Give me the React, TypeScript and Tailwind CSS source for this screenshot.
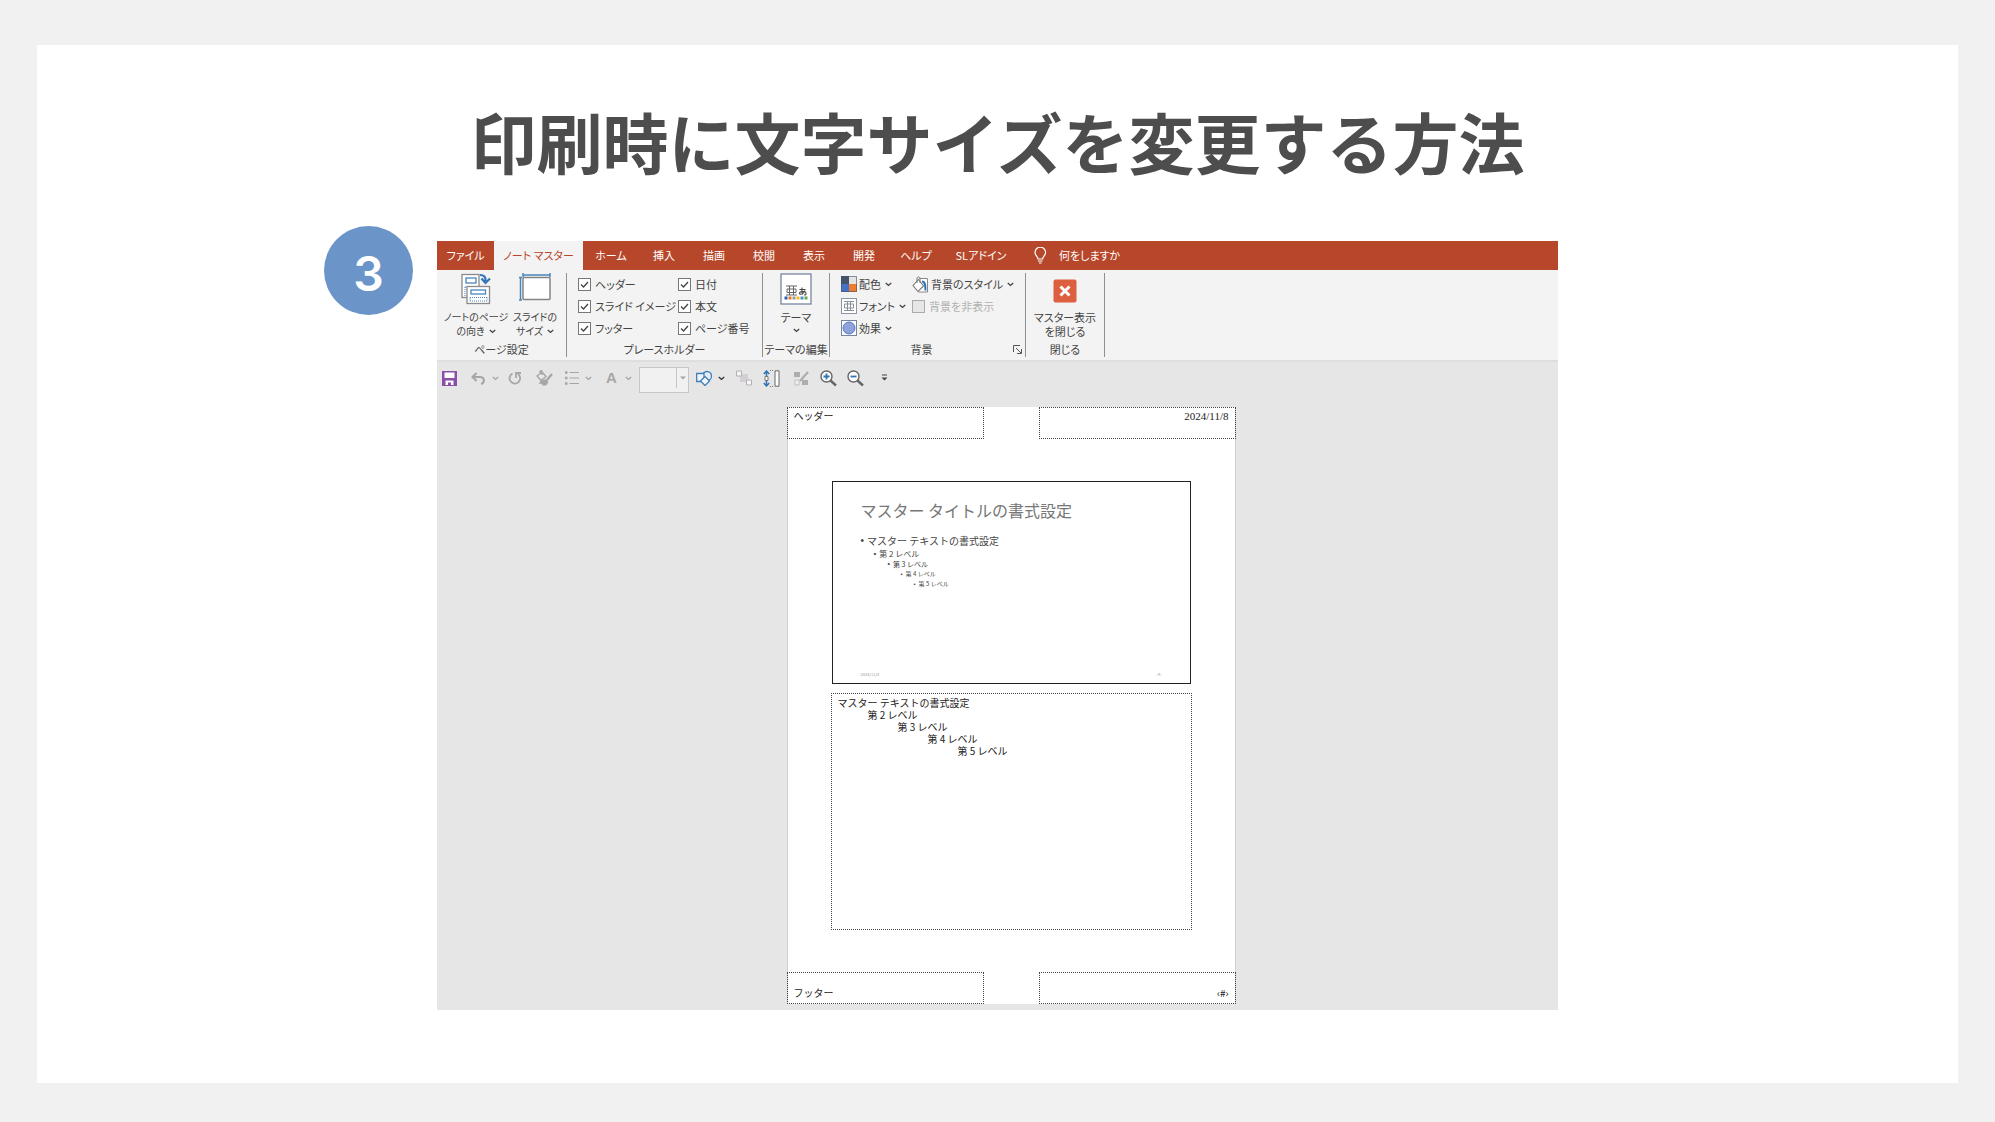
import React from 'react';

const TABS = [
  { label: 'ファイル', width: 'w-[57px]' },
  { label: 'ノート マスター', width: 'w-[89px]', active: true },
  { label: 'ホーム', width: 'w-[56px]' },
  { label: '挿入', width: 'w-[50px]' },
  { label: '描画', width: 'w-[50px]' },
  { label: '校閲', width: 'w-[50px]' },
  { label: '表示', width: 'w-[50px]' },
  { label: '開発', width: 'w-[50px]' },
  { label: 'ヘルプ', width: 'w-[54px]' },
  { label: 'SLアドイン', width: 'w-[76px]' },
];

const Chevron: React.FC<{ className?: string }> = ({ className = 'text-[#444]' }) => (
  <svg className={`shrink-0 ${className}`} width="7" height="5" viewBox="0 0 7 5" fill="none" stroke="currentColor" strokeWidth="1.4">
    <path d="M0.8 1 3.5 3.4 6.2 1" />
  </svg>
);

const PageOrientationIcon = () => (
  <svg width="30" height="32" viewBox="0 0 30 32" fill="none">
    <rect x="1" y="1.5" width="17" height="23" fill="#fff" stroke="#8a8a8a" strokeWidth="1.3" />
    <rect x="5" y="5" width="10" height="5" stroke="#4a86bd" strokeWidth="1.3" />
    <path d="M4 14v9M4 14h2" stroke="#4a86bd" strokeDasharray="1 1" />
    <path d="M19 2c4 0 6 2 5.500 6M20.500 5.500l4 4.500 4.500-4.500" stroke="#2f74b5" strokeWidth="2.200" />
    <rect x="6" y="13.500" width="22.500" height="17" fill="#fff" stroke="#8a8a8a" strokeWidth="1.3" />
    <rect x="10" y="17" width="14.500" height="4" stroke="#4a86bd" strokeWidth="1.3" />
    <path d="M9 24.500h17M9 28h17M9 24.500v4M26 24.500v4" stroke="#4a86bd" strokeDasharray="1 1" />
  </svg>
);

const SlideSizeIcon = () => (
  <svg width="32" height="32" viewBox="0 0 32 32" fill="none">
    <path d="M4 2h27M4 0v4M31 0v4M1.500 4v23M0 4.500h3M0 27h3" stroke="#4a86bd" strokeWidth="1.500" />
    <rect x="4" y="4.500" width="27" height="22" rx="1" fill="#fff" stroke="#858585" strokeWidth="1.500" />
  </svg>
);

const ThemeIcon = () => (
  <svg width="32" height="32" viewBox="0 0 32 32" fill="none">
    <rect x="1" y="1" width="30" height="30" fill="#fff" stroke="#7784a3" strokeWidth="1.300" />
    <path d="M6 13h11M6 22h11M9.500 13v9M13.500 13v9M7 16h9v3.500H7z" stroke="#666" />
    <path d="M19.500 16.500h6M22 14.500c-.5 3 0 5 .5 7M25 17.500c-1 3-5 5-5.500 3s6-3 6.500-.5-1.500 2-2 2" stroke="#444" strokeWidth="1.100" />
    <path d="M4.500 23.500h3v3h-3z" fill="#2b5fb3" />
    <path d="M8.500 23.500h3v3h-3z" fill="#e8742c" />
    <path d="M12.500 23.500h3v3h-3z" fill="#9a9a9a" />
    <path d="M16.500 23.500h3v3h-3z" fill="#f2bc1b" />
    <path d="M20.500 23.500h3v3h-3z" fill="#4a8fd0" />
    <path d="M24.500 23.500h3v3h-3z" fill="#6aa84a" />
  </svg>
);

const ColorsIcon = () => (
  <svg width="16" height="16" viewBox="0 0 16 16">
    <path d="M0 0h8v8H0z" fill="#44546a" />
    <path d="M8 0h8v8H8z" fill="#e4e4e4" />
    <path d="M0 8h8v8H0z" fill="#4472c4" />
    <path d="M8 8h8v8H8z" fill="#ed7d31" />
    <path d="M.5 .5h15v15H.5z" fill="none" stroke="#44546a" strokeOpacity=".6" />
  </svg>
);

const FontsIcon = () => (
  <svg width="16" height="16" viewBox="0 0 16 16" fill="none">
    <rect x="0.5" y="0.5" width="15" height="15" fill="#fff" stroke="#8c94a6" />
    <path d="M3 3.500h10M3 12.500h10M6.500 3.500v9M9.500 3.500v9M3.500 6h9v4h-9z" stroke="#8b8f9c" />
  </svg>
);

const EffectsIcon = () => (
  <svg width="16" height="16" viewBox="0 0 16 16">
    <rect x="0.5" y="0.5" width="15" height="15" fill="#fff" stroke="#7784a3" />
    <circle cx="8" cy="8" r="6" fill="#8fa2dc" stroke="#5b78c4" />
  </svg>
);

const BackgroundStyleIcon = () => (
  <svg width="17" height="17" viewBox="0 0 17 17" fill="none">
    <path d="M7.500 2.500h8v13.500H6.500" fill="#fff" stroke="#888" />
    <path d="M1 9.500l5.500-6 5 6.500-5.500 5.500z" fill="#fff" stroke="#777" strokeWidth="1.100" />
    <path d="M5 7V2.500c0-2 3-2 3 0V7" stroke="#777" />
    <path d="M10 5.500c3 0 3.500 3 3.500 9" stroke="#2f74b5" strokeWidth="2" />
  </svg>
);

const CloseIcon = () => (
  <svg width="24" height="24" viewBox="0 0 24 24">
    <rect x="0.500" y="0.500" width="23" height="23" rx="2" fill="#dc5f40" />
    <path d="M7.500 7.500l9 9M16.500 7.500l-9 9" stroke="#fff" strokeWidth="3" />
  </svg>
);

const CheckField: React.FC<{ id: string; label: string }> = ({ id, label }) => (
  <div className="flex h-[22px] items-center gap-1">
    <span className="grid h-[13px] w-[13px] shrink-0">
      <input
        id={id}
        type="checkbox"
        defaultChecked
        className="peer col-start-1 row-start-1 h-[13px] w-[13px] appearance-none border border-[#777] bg-white"
      />
      <svg className="pointer-events-none invisible col-start-1 row-start-1 peer-checked:visible" width="13" height="13" viewBox="0 0 13 13" fill="none" stroke="#444" strokeWidth="1.300">
        <path d="M3 6.500 5.500 9 10 4" />
      </svg>
    </span>
    <label htmlFor={id} className="whitespace-nowrap">{label}</label>
  </div>
);

const MenuButton: React.FC<{ icon: React.ReactNode; label: string }> = ({ icon, label }) => (
  <button type="button" className="flex h-[22px] items-center gap-0.5 whitespace-nowrap">
    {icon}
    <span>{label}</span>
    <Chevron className="ml-0.5 text-[#444]" />
  </button>
);

const Group: React.FC<{ title: string; width: string; launcher?: boolean; children: React.ReactNode }> = ({ title, width, launcher, children }) => (
  <section className={`flex shrink-0 flex-col border-r border-[#8f8f8f] ${width}`}>
    <div className="flex flex-1">{children}</div>
    <div className="flex h-4 items-center">
      <h2 className="flex-1 whitespace-nowrap text-center">{title}</h2>
      {launcher && (
        <button type="button" aria-label="背景の書式設定" className="mr-[3px]">
          <svg width="9" height="9" viewBox="0 0 9 9" fill="none" stroke="#555">
            <path d="M.5 7V.5H7M3 3l5 5M8.500 4v4.500H4" />
          </svg>
        </button>
      )}
    </div>
  </section>
);

const Ribbon = () => (
  <div className="flex h-[92px] overflow-hidden border-b-2 border-[#dedede] bg-[#f3f3f3] pt-[3px] pb-[3px] text-[11px] leading-[14px] text-[#444]">
    <Group title="ページ設定" width="w-[130px]">
      <button type="button" className="flex w-[78px] flex-col items-center whitespace-nowrap text-[10px]">
        <PageOrientationIcon />
        <span className="mt-[5px]">ノートのページ</span>
        <span className="flex items-center gap-1">の向き<Chevron /></span>
      </button>
      <button type="button" className="flex w-10 flex-col items-center whitespace-nowrap text-[10px]">
        <SlideSizeIcon />
        <span className="mt-[5px]">スライドの</span>
        <span className="flex items-center gap-1">サイズ<Chevron /></span>
      </button>
    </Group>
    <Group title="プレースホルダー" width="w-[196px]">
      <div className="w-[111px] pl-[11px]">
        <CheckField id="ph-header" label="ヘッダー" />
        <CheckField id="ph-image" label="スライド イメージ" />
        <CheckField id="ph-footer" label="フッター" />
      </div>
      <div>
        <CheckField id="ph-date" label="日付" />
        <CheckField id="ph-body" label="本文" />
        <CheckField id="ph-number" label="ページ番号" />
      </div>
    </Group>
    <Group title="テーマの編集" width="w-[67px]">
      <button type="button" className="flex flex-1 flex-col items-center">
        <ThemeIcon />
        <span className="mt-[5px] mb-1">テーマ</span>
        <Chevron />
      </button>
    </Group>
    <Group title="背景" width="w-[196px]" launcher>
      <div className="w-[82px] pl-[11px]">
        <MenuButton icon={<ColorsIcon />} label="配色" />
        <MenuButton icon={<FontsIcon />} label="フォント" />
        <MenuButton icon={<EffectsIcon />} label="効果" />
      </div>
      <div>
        <MenuButton icon={<BackgroundStyleIcon />} label="背景のスタイル" />
        <div className="flex h-[22px] items-center gap-1 text-[#b1b1b1]">
          <input id="hide-bg" type="checkbox" disabled className="h-[13px] w-[13px] appearance-none border border-[#ababab] bg-[#e6e6e6]" />
          <label htmlFor="hide-bg" className="whitespace-nowrap">背景を非表示</label>
        </div>
      </div>
    </Group>
    <Group title="閉じる" width="w-[79px]">
      <button type="button" className="flex flex-1 flex-col items-center whitespace-nowrap pt-1.5">
        <CloseIcon />
        <span className="mt-[7px]">マスター表示</span>
        <span>を閉じる</span>
      </button>
    </Group>
  </div>
);

const ToolButton: React.FC<{ label: string; className?: string; children: React.ReactNode }> = ({ label, className = '', children }) => (
  <button type="button" aria-label={label} className={`flex shrink-0 items-center ${className}`}>
    {children}
  </button>
);

const QuickAccess = () => (
  <div className="flex h-8 items-center overflow-hidden pl-[5px] text-[#a6a6a6]">
    <ToolButton label="上書き保存" className="w-[29px]">
      <svg width="15" height="15" viewBox="0 0 15 15">
        <path d="M0 0h15v15H0z" fill="#8a4fa8" />
        <path d="M2.500 1.500h10v5.500h-10zM3.500 9.500h8V14h-8z" fill="#fff" />
        <path d="M6 11.500h3V14H6z" fill="#8a4fa8" />
      </svg>
    </ToolButton>
    <ToolButton label="元に戻す" className="w-[37px] gap-1.5">
      <svg width="15" height="13" viewBox="0 0 15 13" fill="none" stroke="currentColor" strokeWidth="2">
        <path d="M5.500 1 1.500 5l4 4M2 5h7c5 0 5 6 1 7" />
      </svg>
      <Chevron className="text-[#a6a6a6]" />
    </ToolButton>
    <ToolButton label="繰り返し" className="w-[28px]">
      <svg width="14" height="14" viewBox="0 0 14 14" fill="none" stroke="currentColor" strokeWidth="1.800">
        <path d="M4.500 2.500a5.300 5.300 0 1 0 5.500.5M8 7V2h5" />
      </svg>
    </ToolButton>
    <ToolButton label="塗りつぶし" className="w-[29px]">
      <svg width="17" height="16" viewBox="0 0 17 16" fill="none" stroke="currentColor" strokeWidth="1.300">
        <path d="M1 6l5-4 4 4.500-5 4zM4 4V1.500c0-1 2-1 2 0V5" />
        <path d="M16 4l-5 6" strokeWidth="2.200" />
        <path d="M5 11.500c2 0 3-2 5-1.500 3 1 1 5-2 5-2 0-1.500-2.500-4-2z" fill="currentColor" />
      </svg>
    </ToolButton>
    <ToolButton label="箇条書き" className="w-[41px] gap-1.5">
      <svg width="14" height="14" viewBox="0 0 14 14" fill="none" stroke="currentColor">
        <path d="M4.500 1.500H14M4.500 7H14M4.500 12.500H14" strokeWidth="1.200" />
        <path d="M0 1.500h2.500M0 7h2.500M0 12.500h2.500" strokeWidth="2.500" />
      </svg>
      <Chevron className="text-[#a6a6a6]" />
    </ToolButton>
    <ToolButton label="フォントの色" className="w-[33px] gap-2">
      <span className="font-['Liberation_Sans',sans-serif] text-[15px] font-bold">A</span>
      <Chevron className="text-[#a6a6a6]" />
    </ToolButton>
    <span className="mr-[7px] grid h-[22px] w-[50px] shrink-0 grid-cols-[1fr_13px]">
      <select aria-label="フォント サイズ" disabled className="col-span-2 col-start-1 row-start-1 appearance-none border border-[#c6c6c6] bg-[#f1f1f1]">
        <option></option>
      </select>
      <svg className="pointer-events-none col-start-2 row-start-1" width="13" height="22" viewBox="0 0 13 22">
        <path d="M.5 1v20" stroke="#c6c6c6" />
        <path d="M4 9.500h6l-3 3z" fill="#a6a6a6" />
      </svg>
    </span>
    <ToolButton label="図形" className="w-[40px] gap-1.5">
      <svg width="16" height="16" viewBox="0 0 16 16" fill="none" stroke="#3f80b9" strokeWidth="1.300">
        <circle cx="11" cy="6" r="4.500" fill="#e6eef5" />
        <path d="M.7 3.500H8v8H.7z" fill="#f3f6fa" />
        <path d="M9 6.500l4.500 4.500L9 15.500 4.500 11z" fill="#f3f6fa" />
      </svg>
      <Chevron className="text-[#333]" />
    </ToolButton>
    <ToolButton label="グループ化" className="w-[27px]">
      <svg width="16" height="16" viewBox="0 0 16 16">
        <path d="M4 4h8v8H4z" fill="#d3d0d4" />
        <path d="M.5 1h5v5h-5zM10.500 10h5v5h-5z" fill="#f5f5f5" stroke="#b5b0b6" />
      </svg>
    </ToolButton>
    <ToolButton label="上下に整列" className="w-[31px]">
      <svg width="17" height="17" viewBox="0 0 17 17" fill="none">
        <path d="M3.500 1v15M.8 4l2.700-3 2.700 3M.8 13l2.700 3 2.700-3" stroke="#2f74b5" strokeWidth="1.500" />
        <path d="M2 6.500h3v4H2z" fill="#fff" stroke="#777" />
        <path d="M7 .5h4M7 16.500h4" stroke="#777" strokeDasharray="1 1" />
        <path d="M12 .8h4v15.400h-4z" fill="#fff" stroke="#666" />
      </svg>
    </ToolButton>
    <ToolButton label="書式のコピー" className="w-[26px]">
      <svg width="15" height="15" viewBox="0 0 15 15">
        <path d="M0 1h6v5H0zM8 9h6v5H8z" fill="#adadad" />
        <path d="M14 1 6 10" stroke="#adadad" strokeWidth="2.200" />
        <path d="M1 9h4v5H1z" fill="#f3f3f3" stroke="#bdbdbd" />
      </svg>
    </ToolButton>
    <ToolButton label="拡大" className="w-[27px]">
      <svg width="17" height="17" viewBox="0 0 17 17" fill="none">
        <circle cx="6.500" cy="6.500" r="5.500" fill="#fff" stroke="#666" strokeWidth="1.400" />
        <path d="M10.500 10.500l5.500 5" stroke="#666" strokeWidth="2.400" />
        <path d="M3.500 6.500h6M6.500 3.500v6" stroke="#2f74b5" strokeWidth="1.800" />
      </svg>
    </ToolButton>
    <ToolButton label="縮小" className="w-[34px]">
      <svg width="17" height="17" viewBox="0 0 17 17" fill="none">
        <circle cx="6.500" cy="6.500" r="5.500" fill="#fff" stroke="#666" strokeWidth="1.400" />
        <path d="M10.500 10.500l5.500 5" stroke="#666" strokeWidth="2.400" />
        <path d="M3.500 6.500h6" stroke="#2f74b5" strokeWidth="1.800" />
      </svg>
    </ToolButton>
    <ToolButton label="クイック アクセス ツール バーのユーザー設定">
      <svg width="7" height="8" viewBox="0 0 7 8" fill="#444">
        <path d="M1 .5h5v1H1zM.5 3.500h6l-3 3z" />
      </svg>
    </ToolButton>
  </div>
);

const NotesPage = () => (
  <div className="flex justify-center pt-[13px] pl-[27px] font-['Noto_Sans_CJK_JP',sans-serif] [font-feature-settings:normal]">
    <div className="w-full max-w-[449px] border-x border-[#d0d0d0] bg-white text-[10px] leading-3 text-[#222]">
      <div className="-mx-px flex justify-between">
        <div className="h-8 w-[197px] border border-dotted border-[#444] px-1.5 pt-0.5">ヘッダー</div>
        <div className="h-8 w-[197px] border border-dotted border-[#444] px-1.5 pt-0.5 text-right font-['Liberation_Serif',serif] text-[11px]">2024/11/8</div>
      </div>

      <div className="mx-11 mt-[42px] flex h-[203px] flex-col border border-[#222] px-7 pt-4 pb-1.5">
        <p className="text-[16px] leading-6 text-[#777]">マスター タイトルの書式設定</p>
        <ul className="mt-3 text-[#444]">
          <li className="flex gap-[3px] text-[10px] leading-[14px]"><span className="font-['Liberation_Sans',sans-serif]">•</span>マスター テキストの書式設定</li>
          <li className="ml-[13px] flex gap-[3px] text-[8px] leading-[11px]"><span className="font-['Liberation_Sans',sans-serif]">•</span>第 2 レベル</li>
          <li className="ml-[27px] flex gap-[3px] text-[7px] leading-[10px]"><span className="font-['Liberation_Sans',sans-serif]">•</span>第 3 レベル</li>
          <li className="ml-10 flex gap-[3px] text-[6px] leading-[10px]"><span className="font-['Liberation_Sans',sans-serif]">•</span>第 4 レベル</li>
          <li className="ml-[53px] flex gap-[3px] text-[6px] leading-[10px]"><span className="font-['Liberation_Sans',sans-serif]">•</span>第 5 レベル</li>
        </ul>
        <div className="mt-auto flex justify-between text-[4px] leading-[6px] text-[#999]">
          <span>2024/11/8</span>
          <span>‹#›</span>
        </div>
      </div>

      <div className="mx-[43px] mt-[9px] h-[237px] border border-dotted border-[#444] px-1.5 pt-[3px]">
        <p>マスター テキストの書式設定</p>
        <p className="ml-[30px]">第 2 レベル</p>
        <p className="ml-[60px]">第 3 レベル</p>
        <p className="ml-[90px]">第 4 レベル</p>
        <p className="ml-[120px]">第 5 レベル</p>
      </div>

      <div className="-mx-px mt-[42px] flex justify-between">
        <div className="flex h-8 w-[197px] items-end border border-dotted border-[#444] px-1.5 pb-1">フッター</div>
        <div className="flex h-8 w-[197px] items-end justify-end border border-dotted border-[#444] px-1.5 pb-1">‹#›</div>
      </div>
    </div>
  </div>
);

export default function App() {
  return (
    <div lang="ja" className="min-h-screen bg-[#f1f1f1] px-[37px] pt-[45px] pb-[39px] font-['Noto_Sans_CJK_JP',sans-serif]">
      <main className="bg-white pt-[55px] pb-[73px]">
        <h1 className="text-center text-[66px] leading-[80px] font-bold text-[#4d4d4d]">印刷時に文字サイズを変更する方法</h1>
        <div className="mt-[61px] grid grid-cols-[1fr_minmax(0,1121px)_1fr] items-start">
          <div className="-mt-[15px] mr-6 flex h-[89px] w-[89px] items-center justify-center justify-self-end rounded-full bg-[#6b95c9] pt-1.5 font-['Inter',sans-serif] text-[48px] leading-none font-semibold text-white">
            3
          </div>
          <div className="overflow-hidden bg-[#e6e6e6] pb-1.5 [font-feature-settings:'palt']">
            <nav className="flex h-[29px] bg-[#b7472a] text-[11px] text-white">
              {TABS.map((tab) => (
                <button
                  key={tab.label}
                  type="button"
                  className={`shrink-0 whitespace-nowrap ${tab.width} ${tab.active ? 'bg-[#f3f3f3] text-[#b7472a]' : ''}`}
                >
                  {tab.label}
                </button>
              ))}
              <button type="button" className="ml-[15px] flex shrink-0 items-center gap-3 whitespace-nowrap">
                <svg width="13" height="17" viewBox="0 0 13 17" fill="none" stroke="#fff" strokeWidth="1.200">
                  <path d="M4 12c0-2.500-3-3.500-3-6.500a5.200 5.200 0 0 1 10.600 0c0 3-3 4-3 6.500zM4 14h4.600M5 16h2.600" />
                </svg>
                何をしますか
              </button>
            </nav>
            <Ribbon />
            <QuickAccess />
            <NotesPage />
          </div>
        </div>
      </main>
    </div>
  );
}
